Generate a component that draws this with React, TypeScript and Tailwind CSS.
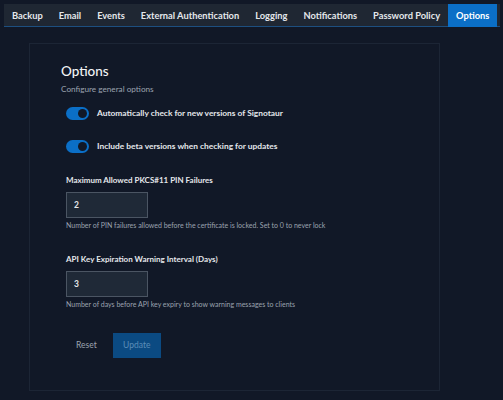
import { useState } from 'react';

const tabs = [
  'Backup',
  'Email',
  'Events',
  'External Authentication',
  'Logging',
  'Notifications',
  'Password Policy',
  'Options',
];

function Toggle({ on, onChange }: { on: boolean; onChange: () => void }) {
  return (
    <button
      onClick={onChange}
      className={`relative w-[23px] h-[13px] rounded-full shrink-0 ${on ? 'bg-[#0b6fc7]' : 'bg-[#374151]'}`}
    >
      <span
        className={`absolute top-[2px] w-[9px] h-[9px] rounded-full bg-[#111827] ${on ? 'left-[12px]' : 'left-[2px]'}`}
      />
    </button>
  );
}

export default function App() {
  const [autoCheck, setAutoCheck] = useState(true);
  const [beta, setBeta] = useState(true);
  const [pinFailures, setPinFailures] = useState('2');
  const [apiDays, setApiDays] = useState('3');

  return (
    <div
      className="w-[503px] h-[400px] bg-[#111827] text-white overflow-hidden whitespace-nowrap"
      style={{ fontFamily: 'Lato, "Noto Sans", sans-serif' }}
    >
      {/* tab bar */}
      <div className="mx-[4px] mt-[4px] mr-[3px] h-[23px] bg-[#1f2733] border-b border-[#1d4f80] flex">
        {tabs.map((t) => (
          <div
            key={t}
            className={`px-[8px] h-[23px] flex items-center text-[9.3px] font-bold ${
              t === 'Options' ? 'bg-[#0b6fc7] text-white' : 'text-[#e5e7eb]'
            }`}
          >
            {t}
          </div>
        ))}
      </div>

      {/* card */}
      <div className="ml-[29px] mt-[16px] w-[411px] h-[348px] border border-[#1c2535] pl-[31px] pt-[17px]">
        <h2 className="text-[13.5px] leading-[21px] font-medium text-[#f3f4f6]">Options</h2>
        <p className="mt-[1px] text-[8.2px] leading-[12px] text-[#9ca3af]">Configure general options</p>

        <div className="pl-[5px]">
          <div className="mt-[11px] flex items-center gap-[8px] h-[14px]">
            <Toggle on={autoCheck} onChange={() => setAutoCheck(!autoCheck)} />
            <span className="text-[8.4px] font-bold text-[#e5e7eb]">Automatically check for new versions of Signotaur</span>
          </div>
          <div className="mt-[19px] flex items-center gap-[8px] h-[14px]">
            <Toggle on={beta} onChange={() => setBeta(!beta)} />
            <span className="text-[8.4px] font-bold text-[#e5e7eb]">Include beta versions when checking for updates</span>
          </div>

          <label className="block mt-[21px] text-[8px] leading-[12px] font-bold text-[#e5e7eb]">
            Maximum Allowed PKCS#11 PIN Failures
          </label>
          <input
            value={pinFailures}
            onChange={(e) => setPinFailures(e.target.value)}
            className="mt-[6px] block w-[82px] h-[26px] bg-[#1f2937] border border-[#4b5563] px-[7px] text-[8.5px] font-bold text-[#e5e7eb] outline-none"
          />
          <p className="mt-[2px] text-[7px] leading-[11px] text-[#9ca3af]">
            Number of PIN failures allowed before the certificate is locked. Set to 0 to never lock
          </p>

          <label className="block mt-[22px] text-[8px] leading-[12px] font-bold text-[#e5e7eb]">
            API Key Expiration Warning Interval (Days)
          </label>
          <input
            value={apiDays}
            onChange={(e) => setApiDays(e.target.value)}
            className="mt-[6px] block w-[82px] h-[26px] bg-[#1f2937] border border-[#4b5563] px-[7px] text-[8.5px] font-bold text-[#e5e7eb] outline-none"
          />
          <p className="mt-[2px] text-[7px] leading-[11px] text-[#9ca3af]">
            Number of days before API key expiry to show warning messages to clients
          </p>

          <div className="mt-[23px] flex items-center gap-[6px]">
            <button className="px-[10px] h-[25px] text-[8.5px] text-[#9ca3af]">Reset</button>
            <button className="w-[48px] h-[25px] bg-[#0b4a82] text-[8.5px] text-[#5b8db8]">Update</button>
          </div>
        </div>
      </div>
    </div>
  );
}
